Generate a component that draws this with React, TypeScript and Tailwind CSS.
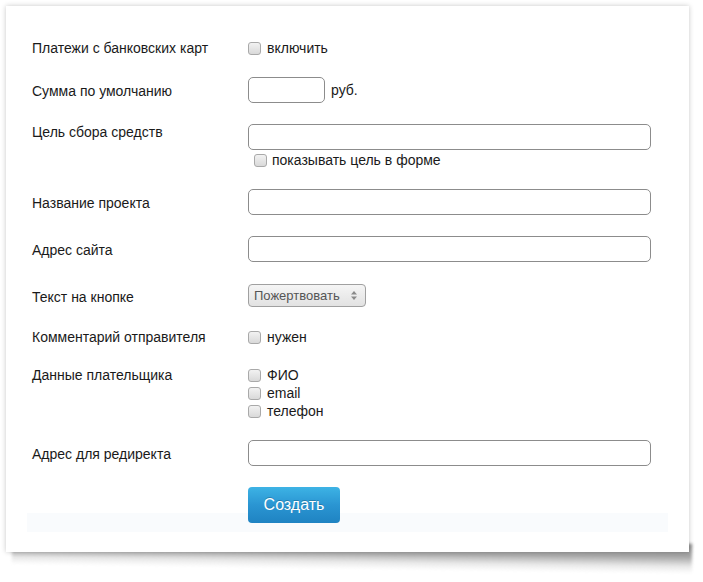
import React from 'react';

const Checkbox = () => (
  <span className="inline-block h-[13px] w-[13px] shrink-0 rounded-[3px] border border-[#a9a9a9] bg-[linear-gradient(to_bottom,#f2f2f2,#d9d9d9)]" />
);

const TextInput = ({ className = '' }: { className?: string }) => (
  <input
    type="text"
    className={`h-[26px] rounded-[5px] border border-[#8c8c8c] bg-white px-2 text-[14px] outline-none ${className}`}
  />
);

const Row = ({
  label,
  children,
  className = '',
  align = 'center',
}: {
  label: string;
  children: React.ReactNode;
  className?: string;
  align?: 'center' | 'start';
}) => (
  <div className={`flex pl-[5px] ${align === 'center' ? 'items-center' : 'items-start'} ${className}`}>
    <div className={`w-[216px] shrink-0 leading-5 ${align === 'start' ? '-mt-[2px]' : 'pt-[2px]'}`}>{label}</div>
    <div className="flex-1">{children}</div>
  </div>
);

export default function App() {
  return (
    <div
      className="min-h-[582px] bg-white pt-[6px] pl-[6px] text-[14px] text-[#1a1a1a]"
      style={{ fontFamily: '"Liberation Sans", Arial, sans-serif' }}>
      <div className="relative w-[683px]">
        {/* поднятая тень снизу */}
        <div className="absolute right-[-3px] bottom-[-17px] left-[6px] h-[30px] rotate-[0.8deg] bg-[linear-gradient(to_bottom,#8c8c8c,#a8a8a8_45%,rgba(215,215,215,0.6)_75%,rgba(255,255,255,0))] blur-[1.5px]" />

        <div className="relative h-[546px] bg-white px-[21px] pt-[30px] shadow-[0_0_5px_rgba(0,0,0,0.22)]">
          {/* Платежи */}
          <Row label="Платежи с банковских карт">
            <label className="flex items-center gap-[6px] pt-[2px] leading-5">
              <Checkbox />
              <span>включить</span>
            </label>
          </Row>

          {/* Сумма */}
          <Row label="Сумма по умолчанию" className="mt-[19px]">
            <div className="flex items-center gap-[6px]">
              <TextInput className="w-[77px]" />
              <span>руб.</span>
            </div>
          </Row>

          {/* Цель */}
          <Row label="Цель сбора средств" align="start" className="mt-[21px]">
            <TextInput className="w-[403px]" />
            <label className="mt-[1px] flex items-center gap-[5px] pl-[6px] leading-[18px]">
              <Checkbox />
              <span>показывать цель в форме</span>
            </label>
          </Row>

          <Row label="Название проекта" className="mt-[20px]">
            <TextInput className="w-[403px]" />
          </Row>

          <Row label="Адрес сайта" className="mt-[21px]">
            <TextInput className="w-[403px]" />
          </Row>

          {/* Текст на кнопке */}
          <Row label="Текст на кнопке" className="mt-[22px]">
            <div className="flex h-[23px] w-[118px] items-center justify-between rounded-[4px] border border-[#a0a0a0] bg-[linear-gradient(to_bottom,#f5f5f5,#e2e2e2)] pr-[8px] pl-[5px] text-[13px] text-[#555]">
              <span>Пожертвовать</span>
              <svg width="6" height="9" viewBox="0 0 6 9" fill="#8a8a8a">
                <path d="M3 0 L6 3.5 H0 Z" />
                <path d="M3 9 L6 5.5 H0 Z" />
              </svg>
            </div>
          </Row>

          <Row label="Комментарий отправителя" className="mt-[18px]">
            <label className="flex items-center gap-[6px] pt-[2px] leading-5">
              <Checkbox />
              <span>нужен</span>
            </label>
          </Row>

          {/* Данные плательщика */}
          <Row label="Данные плательщика" align="start" className="mt-[20px]">
            <div className="-mt-[1px] flex flex-col">
              {['ФИО', 'email', 'телефон'].map((item) => (
                <label key={item} className="flex items-center gap-[6px] leading-[18px]">
                  <Checkbox />
                  <span>{item}</span>
                </label>
              ))}
            </div>
          </Row>

          <Row label="Адрес для редиректа" className="mt-[20px]">
            <TextInput className="w-[403px]" />
          </Row>

          {/* кнопка */}
          <div className="mt-[21px] h-[45px] bg-[linear-gradient(to_bottom,transparent_26px,#f9fbfd_26px)] pl-[221px]">
            <button className="h-[36px] w-[92px] rounded-[4px] bg-[linear-gradient(to_bottom,#3db3e5,#2a95d2_50%,#1f83c2)] text-[16px] text-white [text-shadow:0_-1px_0_rgba(0,0,0,0.2)]">
              Создать
            </button>
          </div>
        </div>
      </div>
    </div>
  );
}
